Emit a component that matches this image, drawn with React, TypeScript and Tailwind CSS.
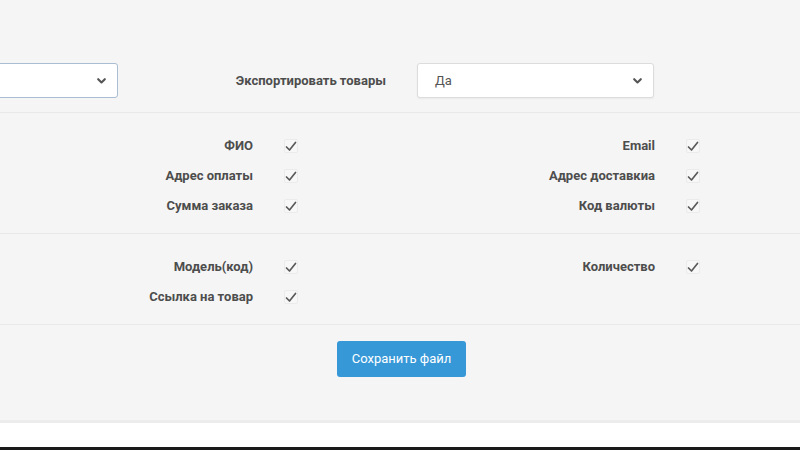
import React from "react"

function Chevron() {
  return (
    <svg width="9" height="6" viewBox="0 0 9 6" className="text-[#555]">
      <path d="M1.2 1.2 L4.5 4.5 L7.8 1.2" fill="none" stroke="currentColor" strokeWidth="2.1" strokeLinecap="round" strokeLinejoin="round" />
    </svg>
  )
}

function Check() {
  return (
    <div className="w-[14px] h-[14px] border border-[#ebebeb] rounded-[2px] bg-[#f7f7f7] flex items-center justify-center">
      <svg width="12" height="11" viewBox="0 0 12 11">
        <path d="M1.5 6 L4.5 9 L10.5 1.5" fill="none" stroke="#5a5a5a" strokeWidth="1.7" strokeLinecap="round" strokeLinejoin="round" />
      </svg>
    </div>
  )
}

function Row({ left, right }: { left: string; right?: string }) {
  return (
    <div className="h-[30px] flex items-center">
      <div className="w-[253px] text-right font-bold text-[13px] text-[#4d4d4d]">{left}</div>
      <div className="ml-[31px]"><Check /></div>
      {right && (
        <>
          <div className="w-[357px] text-right font-bold text-[13px] text-[#4d4d4d]">{right}</div>
          <div className="ml-[31px]"><Check /></div>
        </>
      )}
    </div>
  )
}

export default function App() {
  return (
    <div className="w-[800px] h-[450px] flex flex-col bg-white overflow-hidden font-['Roboto',sans-serif]">
      <div className="h-[423px] bg-[#f5f5f5] border-b-[3px] border-[#ececec] flex flex-col">
        {/* export settings */}
        <div className="pt-[63px] pb-[14px] border-b border-[#e9e9e9]">
          <div className="h-[35px] flex items-center">
            <div className="w-[130px] -ml-[12px] h-[35px] bg-white border border-[#a9bdd3] rounded-[3px] flex items-center justify-end pr-[11px]">
              <Chevron />
            </div>
            <div className="w-[283px] text-right pr-[15px] font-bold text-[13px] text-[#4d4d4d]">Экспортировать товары</div>
            <div className="ml-[16px] w-[237px] h-[35px] bg-white border border-[#dcdcdc] rounded-[3px] shadow-[0_1px_2px_rgba(0,0,0,0.05)] flex items-center justify-between pl-[17px] pr-[11px]">
              <span className="text-[13px] text-[#555]">Да</span>
              <Chevron />
            </div>
          </div>
        </div>

        {/* order fields */}
        <div className="pt-[18px] pb-[12px] border-b border-[#e9e9e9]">
          <Row left="ФИО" right="Email" />
          <Row left="Адрес оплаты" right="Адрес доставкиа" />
          <Row left="Сумма заказа" right="Код валюты" />
        </div>

        {/* product fields */}
        <div className="pt-[18px] pb-[12px] border-b border-[#e9e9e9]">
          <Row left="Модель(код)" right="Количество" />
          <Row left="Ссылка на товар" />
        </div>

        <div className="pt-[16px] flex">
          <button className="ml-[337px] w-[129px] h-[36px] bg-[#3798d8] rounded-[3px] text-white text-[13px]">
            Сохранить файл
          </button>
        </div>
      </div>
      <div className="flex-1 bg-white"></div>
      <div className="h-[3px] bg-[#1a1a1a]"></div>
    </div>
  )
}
